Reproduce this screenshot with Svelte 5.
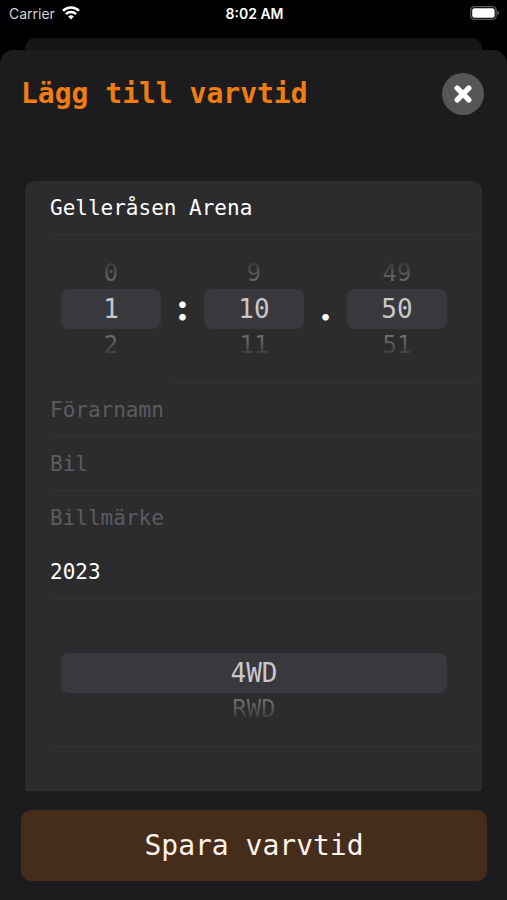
<script>
	let
		track = $state('Gelleråsen Arena'),
		driver = $state(''),
		car = $state(''),
		brand = $state(''),
		year = $state('2023'),
		minutes = $state(1),
		seconds = $state(10),
		hundredths = $state(50),
		drive = $state(0);

	const range = (count) => Array.from({ length: count }, (_, i) => String(i));

	const
		minuteOptions = range(60),
		secondOptions = range(60),
		hundredthOptions = range(100),
		driveOptions = ['4WD', 'RWD', 'FWD'];

	function onSubmit(event) {
		event.preventDefault();
	}
</script>

{#snippet wheel(label, options, index, set)}
	<div class="wheel" role="group" aria-label={label}>
		<button class="option before" type="button" disabled={index === 0} onclick={() => set(index - 1)}>
			{options[index - 1] ?? ''}
		</button>
		<output class="selected">{options[index]}</output>
		<button class="option after" type="button" disabled={index === options.length - 1} onclick={() => set(index + 1)}>
			{options[index + 1] ?? ''}
		</button>
	</div>
{/snippet}

<div class="screen">
	<div class="status">
		<div class="carrier">
			<span>Carrier</span>
			<svg width="18" height="14" viewBox="0 0 18 14" aria-hidden="true">
				<g fill="none" stroke="#fff" stroke-width="2.5">
					<path d="M1 4.9a11.4 11.4 0 0 1 16 0"></path>
					<path d="M3.9 8.2a7.3 7.3 0 0 1 10.2 0"></path>
				</g>
				<path d="M9 13.6l-2.9-3a4.1 4.1 0 0 1 5.8 0z" fill="#fff"></path>
			</svg>
		</div>
		<span class="time">8:02 AM</span>
		<svg class="battery" width="30" height="14" viewBox="0 0 30 14" aria-hidden="true">
			<rect x="0.7" y="0.7" width="25.4" height="12.6" rx="3.6" fill="none" stroke="#59595b" stroke-width="1.3"></rect>
			<rect x="2.2" y="2.2" width="22.4" height="9.6" rx="2.2" fill="#fff"></rect>
			<path d="M27.5 4.7c1.9.6 1.9 4 0 4.6z" fill="#6c6c6e"></path>
		</svg>
	</div>

	<div class="behind"></div>

	<form class="sheet" onsubmit={onSubmit}>
		<header>
			<h1>Lägg till varvtid</h1>
			<button class="close" type="button" aria-label="Stäng">
				<svg width="18" height="18" viewBox="0 0 18 18" aria-hidden="true">
					<path d="M3.2 3.2l11.6 11.6M14.8 3.2L3.2 14.8" stroke="#fff" stroke-width="5.4" stroke-linecap="round"></path>
				</svg>
			</button>
		</header>

		<div class="card">
			<div class="row line">
				<input aria-label="Bana" bind:value={track}>
			</div>

			<div class="picker line short">
				{@render wheel('Minuter', minuteOptions, minutes, (i) => minutes = i)}
				<span class="separator">:</span>
				{@render wheel('Sekunder', secondOptions, seconds, (i) => seconds = i)}
				<span class="separator">.</span>
				{@render wheel('Hundradelar', hundredthOptions, hundredths, (i) => hundredths = i)}
			</div>

			<div class="row line">
				<input aria-label="Förarnamn" placeholder="Förarnamn" bind:value={driver}>
			</div>
			<div class="row line">
				<input aria-label="Bil" placeholder="Bil" bind:value={car}>
			</div>
			<div class="row">
				<input aria-label="Billmärke" placeholder="Billmärke" bind:value={brand}>
			</div>
			<div class="row line">
				<input aria-label="Årsmodell" inputmode="numeric" bind:value={year}>
			</div>

			<div class="picker line">
				{@render wheel('Drivning', driveOptions, drive, (i) => drive = i)}
			</div>
		</div>

		<button class="save" type="submit">Spara varvtid</button>
	</form>
</div>

<style>
	:global(body) {
		margin: 0;
		background-color: #000;
	}

	.screen {
		--mono: "DejaVu Sans Mono", "Liberation Mono", monospace;

		display: flex;
		flex-direction: column;
		min-height: 100vh;

		background-color: #000;
		color: #fff;
		font-family: var(--mono);
	}

	button,
	input {
		border: none;
		padding: 0;
		background: none;
		color: inherit;
		font-family: inherit;
	}

	button {
		cursor: pointer;
	}

	.status {
		display: grid;
		grid-template-columns: 1fr auto 1fr;
		align-items: center;

		height: 26px;
		padding: 0 7px 0 9px;
		margin-bottom: 12px;

		font-family: Inter, sans-serif;
		font-size: 14px;
	}

	.carrier {
		display: flex;
		align-items: center;
		gap: 7px;
		color: #d2d2d2;
	}

	.time {
		font-weight: 600;
	}

	.battery {
		justify-self: end;
	}

	.behind {
		height: 12px;
		margin: 0 25px;
		border-radius: 10px 10px 0 0;
		background-color: #151516;
	}

	.sheet {
		display: flex;
		flex: 1;
		flex-direction: column;

		padding: 23px 20px 19px 21px;
		border-radius: 14px 14px 0 0;
		background-color: #1c1c1e;
	}

	header {
		display: flex;
		align-items: center;
		justify-content: space-between;
		padding: 0 3px 0 0;
		margin-bottom: 66px;
	}

	h1 {
		margin: 0;
		color: #f07c13;
		font-size: 28px;
		line-height: 42px;
		font-weight: 700;
	}

	.close {
		display: flex;
		align-items: center;
		justify-content: center;

		width: 42px;
		height: 42px;
		border-radius: 50%;
		background-color: #565657;
	}

	.card {
		flex: 1;
		margin: 0 5px 19px 4px;
		border-radius: 10px 10px 2px 2px;
		background-color: #2c2c2e;
	}

	.row {
		display: flex;
		height: 54px;
	}

	.row input {
		flex: 1;
		min-width: 0;
		padding: 0 25px;
		outline: none;
		font-size: 21px;
	}

	.row input::placeholder {
		color: #5c5c5f;
		opacity: 1;
	}

	.line {
		background: linear-gradient(#333335, #333335) right 3px bottom / calc(100% - 28px) 1px no-repeat;
	}

	.short {
		background-size: calc(100% - 150px) 1px;
	}

	.picker {
		display: flex;
		align-items: center;
		box-sizing: border-box;
		height: 148px;
		padding: 0 35px 0 36px;
	}

	.wheel {
		display: flex;
		flex: 1;
		flex-direction: column;
		min-width: 0;
	}

	.selected {
		border-radius: 8px;
		background-color: #39393d;
		color: #c8c8ca;
		font-size: 26px;
		line-height: 40px;
		text-align: center;
	}

	.option {
		height: 32px;
		color: #77777a;
		font-size: 24px;
		line-height: 32px;
	}

	.before {
		-webkit-mask-image: linear-gradient(transparent, #000 90%);
		mask-image: linear-gradient(transparent, #000 90%);
	}

	.after {
		-webkit-mask-image: linear-gradient(#000 10%, transparent);
		mask-image: linear-gradient(#000 10%, transparent);
	}

	.separator {
		width: 43px;
		padding-bottom: 4px;
		font-family: Lato, sans-serif;
		font-size: 34px;
		line-height: 40px;
		font-weight: 900;
		text-align: center;
		-webkit-text-stroke: 1px #fff;
	}

	.save {
		border-radius: 10px;
		background-color: #462c1b;
		color: #fdf3ea;
		font-size: 28px;
		line-height: 71px;
	}
</style>
